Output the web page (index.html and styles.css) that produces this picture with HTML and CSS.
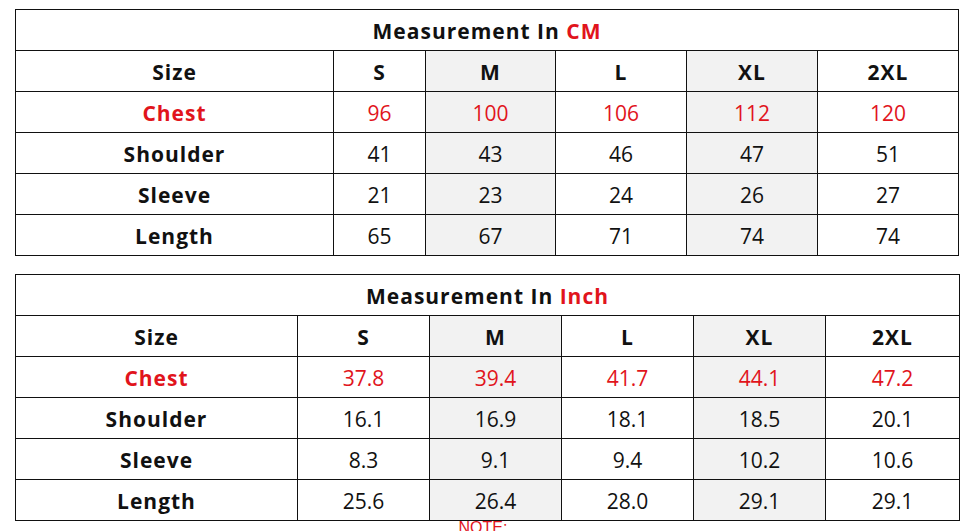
FILE: index.html
```html
<!DOCTYPE html>
<html>
<head>
<meta charset="utf-8">
<link rel="stylesheet" href="styles.css">
</head>
<body>
<div class="page">
  <table class="chart chart-cm">
    <colgroup>
      <col style="width:318px"><col style="width:92px"><col style="width:130px"><col style="width:131px"><col style="width:131px"><col style="width:141px">
    </colgroup>
    <tr class="title-row"><td colspan="6">Measurement In <span class="red">CM</span></td></tr>
    <tr class="head"><th>Size</th><td>S</td><td class="shade">M</td><td>L</td><td class="shade">XL</td><td>2XL</td></tr>
    <tr class="red-row"><th>Chest</th><td>96</td><td class="shade">100</td><td>106</td><td class="shade">112</td><td>120</td></tr>
    <tr><th>Shoulder</th><td>41</td><td class="shade">43</td><td>46</td><td class="shade">47</td><td>51</td></tr>
    <tr><th>Sleeve</th><td>21</td><td class="shade">23</td><td>24</td><td class="shade">26</td><td>27</td></tr>
    <tr><th>Length</th><td>65</td><td class="shade">67</td><td>71</td><td class="shade">74</td><td>74</td></tr>
  </table>

  <table class="chart chart-inch">
    <colgroup>
      <col style="width:282px"><col style="width:132px"><col style="width:132px"><col style="width:132px"><col style="width:132px"><col style="width:134px">
    </colgroup>
    <tr class="title-row"><td colspan="6">Measurement In <span class="red">Inch</span></td></tr>
    <tr class="head"><th>Size</th><td>S</td><td class="shade">M</td><td>L</td><td class="shade">XL</td><td>2XL</td></tr>
    <tr class="red-row"><th>Chest</th><td>37.8</td><td class="shade">39.4</td><td>41.7</td><td class="shade">44.1</td><td>47.2</td></tr>
    <tr><th>Shoulder</th><td>16.1</td><td class="shade">16.9</td><td>18.1</td><td class="shade">18.5</td><td>20.1</td></tr>
    <tr><th>Sleeve</th><td>8.3</td><td class="shade">9.1</td><td>9.4</td><td class="shade">10.2</td><td>10.6</td></tr>
    <tr><th>Length</th><td>25.6</td><td class="shade">26.4</td><td>28.0</td><td class="shade">29.1</td><td>29.1</td></tr>
  </table>

  <p class="note">NOTE:</p>
</div>
</body>
</html>
```

FILE: styles.css
```css
html, body {
  margin: 0;
  padding: 0;
  background: #fff;
}
body {
  font-family: "Open Sans", "DejaVu Sans", sans-serif;
  color: #111;
}
.page {
  padding: 9px 0 0 15px;
  display: flex;
  flex-direction: column;
  align-items: flex-start;
  gap: 18px;
}
.chart {
  border-collapse: collapse;
  table-layout: fixed;
}
.chart-cm { width: 943px; }
.chart-inch { width: 944px; }
.chart td, .chart th {
  border: 1px solid #111;
  height: 38px;
  padding: 2px 0 0 0;
  text-align: center;
  vertical-align: middle;
  font-size: 21px;
  font-weight: 400;
  line-height: 24px;
}
.chart th,
.chart .title-row td,
.chart .head td {
  font-weight: 700;
  font-size: 21px;
  letter-spacing: 1px;
}
.chart .shade { background: #f2f2f2; }
.red, .red-row th, .red-row td { color: #e1141c; }
.note {
  margin: -19px 0 0 -14px;
  align-self: stretch;
  text-align: center;
  font-family: "Liberation Sans", Arial, sans-serif;
  font-size: 16px;
  color: #e1141c;
  line-height: 16px;
}
```
